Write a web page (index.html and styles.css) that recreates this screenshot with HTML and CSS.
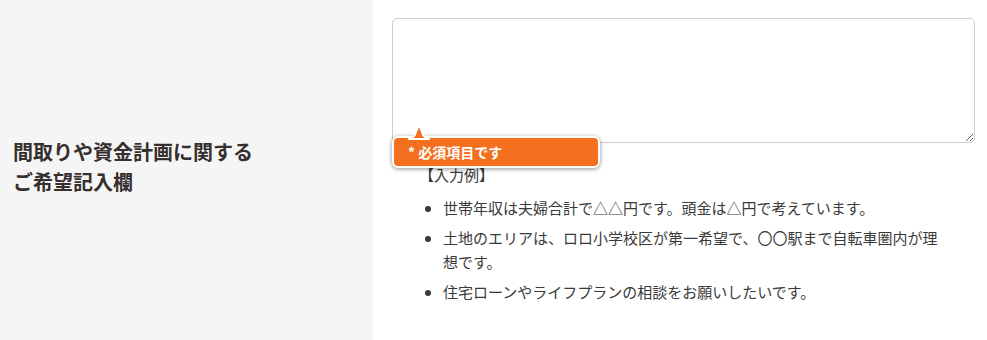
FILE: index.html
```html
<!DOCTYPE html>
<html lang="ja">
<head>
<meta charset="utf-8">
<title>ご希望記入欄</title>
<link rel="stylesheet" href="styles.css">
</head>
<body>
<div class="row">
  <div class="label-cell">
    <p class="label">間取りや資金計画に関する<br>ご希望記入欄</p>
  </div>
  <div class="field-cell">
    <div class="field-wrap">
      <textarea class="input"></textarea>
      <div class="tip">
        <svg class="tip-arrow" width="22" height="16" viewBox="0 0 22 16">
          <path d="M1 15 C5 14 7 12 8 8 C9 5 10 3 11 2 C12 3 13 5 14 8 C15 12 17 14 21 15 Z" fill="#f4701f" stroke="#ffffff" stroke-width="2" stroke-linejoin="round"/>
        </svg>
        <span class="tip-text">* 必須項目です</span>
      </div>
    </div>
    <div class="note">
      <p class="note-title">【入力例】</p>
      <ul class="note-list">
        <li>世帯年収は夫婦合計で△△円です。頭金は△円で考えています。</li>
        <li>土地のエリアは、ロロ小学校区が第一希望で、〇〇駅まで自転車圏内が理想です。</li>
        <li>住宅ローンやライフプランの相談をお願いしたいです。</li>
      </ul>
    </div>
  </div>
</div>
</body>
</html>
```

FILE: styles.css
```css
* { box-sizing: border-box; }
html, body {
  margin: 0;
  padding: 0;
  background: #ffffff;
}
body {
  font-family: "Noto Sans CJK JP", "Noto Sans", sans-serif;
  color: #333333;
}
.row {
  display: flex;
  height: 340px;
}
.label-cell {
  width: 373px;
  flex: 0 0 373px;
  background: #f5f5f5;
  display: flex;
  align-items: center;
  padding: 0 0 6px 13px;
}
.label {
  margin: 0;
  font-size: 20px;
  font-weight: 700;
  line-height: 30px;
  color: #352f2d;
}
.field-cell {
  flex: 1;
  padding: 18px 12px 0 19px;
}
.field-wrap {
  position: relative;
}
.input {
  display: block;
  width: 100%;
  height: 125px;
  margin: 0;
  border: 1px solid #cccccc;
  border-radius: 5px;
  background: #ffffff;
  font-family: inherit;
  font-size: 15px;
}
.tip {
  position: absolute;
  left: 0;
  top: 118px;
  width: 208px;
  height: 32px;
  background: #f4701f;
  border: 2px solid #ffffff;
  border-radius: 6px;
  box-shadow: 0 1px 4px rgba(0, 0, 0, 0.45);
  display: flex;
  align-items: center;
  padding-left: 14px;
}
.tip-arrow {
  position: absolute;
  left: 14px;
  top: -14px;
  display: block;
}
.tip-text {
  color: #ffffff;
  font-size: 14px;
  font-weight: 700;
  line-height: 1;
}
.note {
  margin: 20px 30px 0 27px;
  font-size: 15px;
  color: #3a3a3a;
}
.note-title {
  margin: 0 0 9px;
  line-height: 24px;
}
.note-list {
  margin: 0;
  padding-left: 24px;
}
.note-list li {
  line-height: 24px;
  margin-bottom: 6px;
}
```
